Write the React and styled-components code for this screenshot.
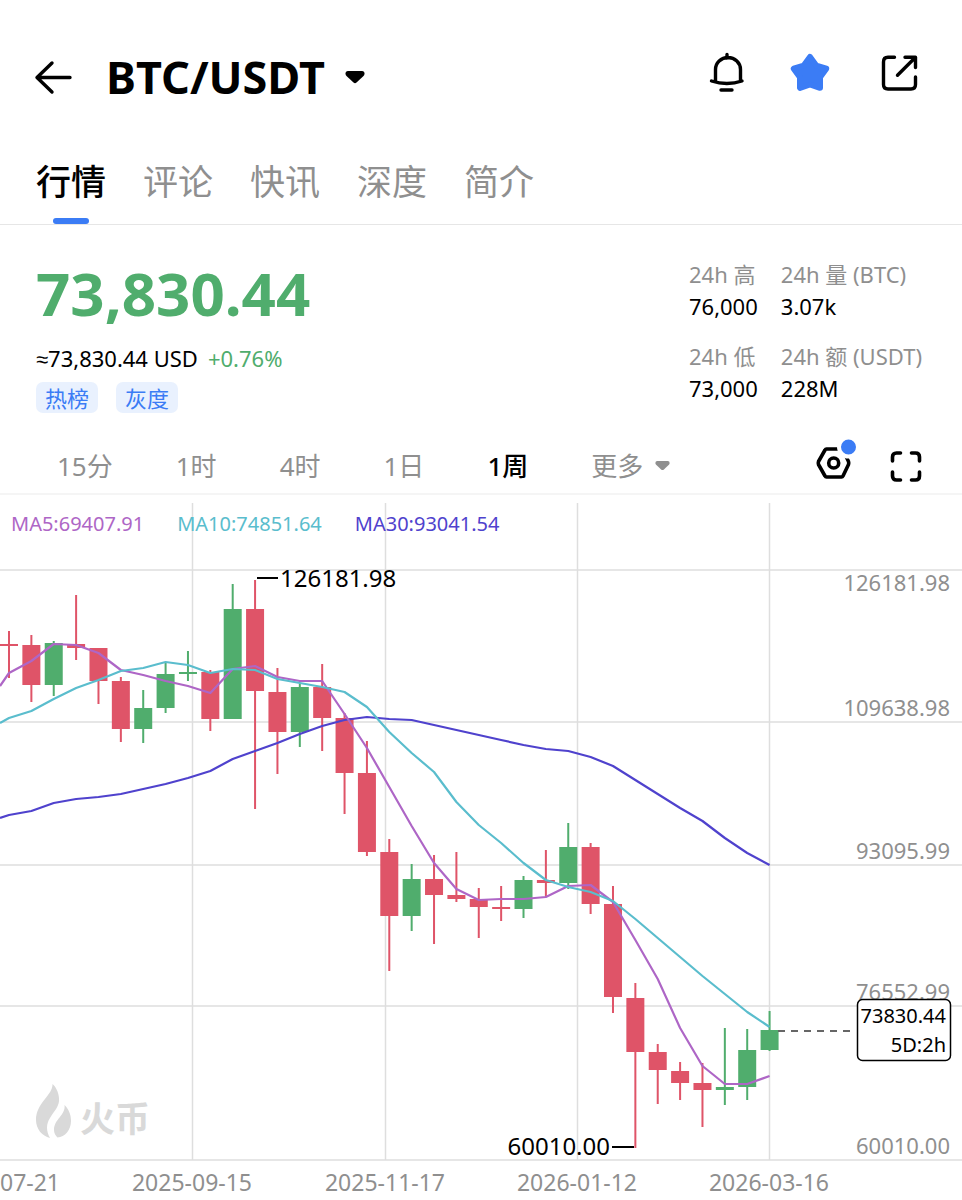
import { useState } from 'react'
import styled, { createGlobalStyle } from 'styled-components'

const UP = '#50ad6d';
const DOWN = '#df5468';
const BLUE = '#3b7cf5';
const GREY = '#8f8f8f';

const GlobalStyle = createGlobalStyle`
  * {
    box-sizing: border-box;
  }

  body {
    margin: 0;
    background: #fff;
    color: #000;
    font-family: 'Noto Sans', 'Liberation Sans', 'Noto Sans CJK SC', sans-serif;
  }

  button {
    padding: 0;
    border: none;
    background: none;
    color: inherit;
    font: inherit;
    cursor: pointer;
  }

  svg {
    display: block;
  }
`;

const Page = styled.main`
  display: flex;
  flex-direction: column;
  overflow: hidden;
`;

const Header = styled.header`
  display: flex;
  align-items: center;
  height: 109px;
  padding: 45px 35px 0 34px;
`;

const PairButton = styled.button`
  display: flex;
  align-items: center;
  gap: 20px;
  margin-left: 32px;
  font-size: 45px;
  font-weight: 700;
  line-height: 64px;
`;

const Actions = styled.div`
  display: flex;
  gap: 30px;
  margin-left: auto;
`;

const Tabs = styled.nav`
  display: flex;
  gap: 37px;
  padding: 45px 36px 0;
  border-bottom: 1px solid #e6e6e6;
`;

const Tab = styled.button`
  position: relative;
  padding-bottom: 18px;
  color: ${({ $active }) => ($active ? '#000' : GREY)};
  font-family: 'Noto Sans CJK SC', sans-serif;
  font-size: 35px;
  font-weight: ${({ $active }) => ($active ? 500 : 400)};
  line-height: 52px;

  &::after {
    content: '';
    position: absolute;
    bottom: 0;
    left: 50%;
    width: 36px;
    height: 6px;
    margin-left: -18px;
    border-radius: 3px;
    background: ${({ $active }) => ($active ? BLUE : 'transparent')};
  }
`;

const Summary = styled.section`
  display: flex;
  justify-content: space-between;
  align-items: flex-start;
  padding: 32px 40px 27px 36px;
  font-size: 22px;
  line-height: 32px;
`;

const Price = styled.div`
  color: ${UP};
  font-size: 60px;
  font-weight: 700;
  line-height: 72px;
`;

const Converted = styled.div`
  display: flex;
  gap: 10px;
  margin-top: 13px;
`;

const Change = styled.span`
  color: ${UP};
`;

const Tags = styled.div`
  display: flex;
  gap: 18px;
  margin-top: 8px;
`;

const Tag = styled.a`
  padding: 0 9px;
  border-radius: 7px;
  background: #e9f1fe;
  color: ${BLUE};
  font-family: 'Noto Sans CJK SC', sans-serif;
  line-height: 31px;
  text-decoration: none;
`;

const Stats = styled.dl`
  display: grid;
  grid-template-columns: auto auto;
  gap: 18px 23px;
  margin: 1px 0 0;

  dt {
    color: ${GREY};
  }

  dd {
    margin: 0;
  }
`;

const PeriodBar = styled.div`
  display: flex;
  align-items: center;
  height: 55px;
  padding: 0 40px 2px 57px;
  border-bottom: 2px solid #f5f5f5;
`;

const Periods = styled.div`
  display: flex;
  gap: 63px;
`;

const Period = styled.button`
  display: flex;
  align-items: center;
  gap: 12px;
  color: ${({ $active }) => ($active ? '#000' : GREY)};
  font-size: 26px;
  font-weight: ${({ $active }) => ($active ? 500 : 400)};
  line-height: 40px;
`;

const Tools = styled.div`
  display: flex;
  gap: 34px;
  margin: 0 0 12px auto;
`;

const ChartArea = styled.section`
  position: relative;
`;

const Legend = styled.div`
  position: absolute;
  top: 14px;
  left: 11px;
  display: flex;
  gap: 33px;
  font-size: 20px;
  line-height: 30px;
`;

const LegendItem = styled.span`
  color: ${({ $color }) => $color};
`;

const Plot = styled.svg`
  width: 100%;
  height: auto;
  font-size: 22px;
`;

const tabs = ['行情', '评论', '快讯', '深度', '简介'];
const periods = ['15分', '1时', '4时', '1日', '1周'];

const stats = [
  { label: '24h 高', value: '76,000' },
  { label: '24h 量 (BTC)', value: '3.07k' },
  { label: '24h 低', value: '73,000' },
  { label: '24h 额 (USDT)', value: '228M' },
];

// body top, body bottom, high, low, rising
const candles = [
  [644, 646, 631, 678, 0],
  [645, 685, 635, 702, 0],
  [643, 685, 641, 696, 1],
  [644, 648, 595, 660, 0],
  [648, 681, 648, 704, 0],
  [681, 729, 677, 742, 0],
  [708, 729, 690, 743, 1],
  [674, 708, 663, 713, 1],
  [672, 674, 651, 681, 1],
  [672, 719, 670, 731, 0],
  [609, 719, 584, 719, 1],
  [609, 691, 580, 809, 0],
  [692, 732, 668, 774, 0],
  [687, 732, 684, 747, 1],
  [687, 718, 664, 751, 0],
  [718, 773, 713, 814, 0],
  [773, 852, 741, 856, 0],
  [852, 916, 839, 971, 0],
  [879, 916, 864, 931, 1],
  [879, 895, 855, 944, 0],
  [895, 899, 852, 902, 0],
  [899, 907, 888, 938, 0],
  [907, 909, 886, 921, 0],
  [880, 909, 876, 918, 1],
  [880, 883, 850, 897, 0],
  [847, 883, 823, 889, 1],
  [847, 904, 843, 914, 0],
  [904, 997, 886, 1013, 0],
  [998, 1052, 983, 1148, 0],
  [1052, 1070, 1044, 1104, 0],
  [1071, 1083, 1062, 1100, 0],
  [1083, 1090, 1063, 1127, 0],
  [1087, 1090, 1028, 1105, 1],
  [1050, 1087, 1029, 1100, 1],
  [1030, 1050, 1011, 1051, 1],
];

// the first point of each line sits on the left edge, the rest on a candle
const averages = [
  {
    label: 'MA30:93041.54',
    color: '#4f42cd',
    points: [818, 815, 811, 803, 799, 797, 794, 789, 784, 778, 771, 759, 751, 743, 734, 726, 720, 717, 719, 720, 725, 730, 735, 740, 745, 749, 751, 757, 766, 780, 794, 808, 821, 838, 853, 865],
  },
  {
    label: 'MA5:69407.91',
    color: '#ae66c6',
    points: [686, 673, 661, 644, 645, 653, 670, 675, 681, 686, 693, 669, 666, 677, 681, 681, 714, 748, 787, 826, 863, 889, 900, 899, 899, 897, 886, 885, 902, 940, 979, 1028, 1066, 1084, 1084, 1076],
  },
  {
    label: 'MA10:74851.64',
    color: '#5abdcd',
    points: [723, 718, 711, 699, 688, 680, 671, 668, 662, 665, 673, 669, 670, 679, 683, 687, 692, 707, 732, 753, 772, 802, 825, 843, 863, 880, 887, 892, 901, 919, 938, 957, 976, 994, 1012, 1027],
  },
];

const legend = [averages[1], averages[2], averages[0]];

const priceLabels = [
  { text: '126181.98', line: 570, y: 591 },
  { text: '109638.98', line: 722, y: 716 },
  { text: '93095.99', line: 865, y: 859 },
  { text: '76552.99', line: 1006, y: 1000 },
  { text: '60010.00', line: 1160, y: 1154 },
];

const dates = [
  { text: '2025-07-21', x: 0 },
  { text: '2025-09-15', x: 192 },
  { text: '2025-11-17', x: 385 },
  { text: '2026-01-12', x: 577 },
  { text: '2026-03-16', x: 769 },
];

const candleX = (i) => 9 + i * 22.37;

const toPath = (points) =>
  points.map((y, i) => `${i === 0 ? 0 : candleX(i - 1)},${y}`).join(' ');

const BackIcon = () => (
  <svg width="40" height="40" viewBox="0 0 40 40" fill="none" stroke="#000" strokeWidth="3.400" strokeLinecap="round" strokeLinejoin="round">
    <path d="M18 6 3 20.500 18 35M3 20.500H36" />
  </svg>
);

const CaretIcon = ({ size, color }) => (
  <svg width={size} height={size} viewBox="0 0 20 20" fill={color}>
    <path d="M3 4H17Q19.500 4 19.500 6.500 19.500 8 18.500 9L11.500 15.500Q10 16.800 8.500 15.500L1.500 9Q.5 8 .5 6.500.5 4 3 4Z" />
  </svg>
);

const BellIcon = () => (
  <svg width="56" height="56" viewBox="0 0 56 56" fill="none" stroke="#000" strokeWidth="3.400" strokeLinecap="round" strokeLinejoin="round">
    <path d="M28 5.500V9M16.500 32V20.500A12.500 12 0 0 1 41.500 20.500V32M12.500 32Q28 37 43 32M22 41H33" />
  </svg>
);

const StarIcon = () => (
  <svg width="56" height="56" viewBox="0 0 56 56" fill={BLUE} stroke={BLUE} strokeWidth="6" strokeLinejoin="round">
    <path d="M25 8 31.200 16.500 41.200 19.700 35 28.200V38.800L25 35.500 15 38.800V28.200L8.800 19.700 18.800 16.500Z" />
  </svg>
);

const ShareIcon = () => (
  <svg width="56" height="56" viewBox="0 0 56 56" fill="none" stroke="#000" strokeWidth="3.400" strokeLinecap="round" strokeLinejoin="round">
    <path d="M23.500 8.300H17Q12.500 8.300 12.500 13V35.500Q12.500 40 17 40H40Q44.500 40 44.500 35.500V28M34 8.300H44.500V18.500M44.500 8.300 26.500 26.300" />
  </svg>
);

const SettingsIcon = () => (
  <svg width="40" height="46" viewBox="0 0 40 46" fill="none" stroke="#000" strokeWidth="3.600" strokeLinejoin="round">
    <path d="M10.500 12H25.500Q26.500 12 27 13L32.500 24.500Q33 26 32.500 27.500L27 39Q26.500 40 25.500 40H10.500Q9.500 40 9 39L2.500 27.500Q2 26 2.500 24.500L9 13Q9.500 12 10.500 12Z" />
    <circle cx="17.700" cy="26" r="5" />
    <circle cx="32.500" cy="10" r="9.500" fill={BLUE} stroke="#fff" strokeWidth="4" />
  </svg>
);

const ExpandIcon = () => (
  <svg width="32" height="46" viewBox="0 0 32 46" fill="none" stroke="#000" strokeWidth="3.600" strokeLinecap="round">
    <path d="M2.500 24V20Q2.500 16 6.500 16H10.500M21.500 16H25.500Q29.500 16 29.500 20V24M29.500 35V39Q29.500 43 25.500 43H21.500M10.500 43H6.500Q2.500 43 2.500 39V35" />
  </svg>
);

const Watermark = () => (
  <g fill="#d9d9d9">
    <path d="M52.500 1084C53 1095 36 1103 36 1120C36 1129 42 1136 50 1138C46 1131 46 1124 50 1118C54 1111 60 1106 59 1098C58.500 1092 56 1087 52.500 1084Z" />
    <path d="M64.500 1105C66 1115 54 1119 54 1130C54 1133 55.500 1136 57.500 1137.500C65 1137 71 1130 71 1121C71 1114 68.500 1109 64.500 1105Z" />
    <text x="80" y="1132" fontSize="35" fontWeight="700">火币</text>
  </g>
);

const Chart = () => (
  <Plot viewBox="0 495 962 705" role="img" aria-label="BTC/USDT 1周">
    <g stroke="#dedede" strokeWidth="1.500">
      {priceLabels.map(({ line }) => (
        <line key={line} x1="0" x2="962" y1={line} y2={line} />
      ))}
      {dates.slice(1).map(({ x }) => (
        <line key={x} x1={x + 0.5} x2={x + 0.5} y1="503" y2="1160" />
      ))}
    </g>

    <Watermark />

    {candles.map(([top, bottom, high, low, rising], i) => (
      <g key={i} fill={rising ? UP : DOWN}>
        <rect x={candleX(i) - 1} y={high} width="2" height={low - high} />
        <rect x={candleX(i) - 9} y={top} width="18" height={bottom - top} />
      </g>
    ))}

    {averages.map(({ label, color, points }) => (
      <polyline key={label} points={toPath(points)} fill="none" stroke={color} strokeWidth="2.200" strokeLinejoin="round" />
    ))}

    <g fill={GREY}>
      {priceLabels.map(({ text, y }) => (
        <text key={text} x="950" y={y} textAnchor="end">{text}</text>
      ))}
      {dates.map(({ text, x }) => (
        <text key={text} x={x} y="1191" textAnchor="middle" fontSize="23">{text}</text>
      ))}
    </g>

    <g fontSize="24">
      <path d="M257 578H278M612 1147H634" stroke="#000" strokeWidth="2" />
      <text x="280" y="587">126181.98</text>
      <text x="610" y="1155" textAnchor="end">60010.00</text>
    </g>

    <path d="M778 1031H853" stroke="#666" strokeWidth="2" strokeDasharray="7 6" />
    <rect x="857.500" y="999.500" width="93" height="61" rx="5" fill="#fff" stroke="#000" strokeWidth="1.500" />
    <g fontSize="20" textAnchor="end">
      <text x="946" y="1023">73830.44</text>
      <text x="946" y="1052">5D:2h</text>
    </g>
  </Plot>
);

const App = () => {
  const [tab, setTab] = useState('行情');
  const [period, setPeriod] = useState('1周');

  return (
    <Page>
      <GlobalStyle />
      <Header>
        <button type="button" aria-label="返回"><BackIcon /></button>
        <PairButton type="button">
          BTC/USDT
          <CaretIcon size={20} color="#000" />
        </PairButton>
        <Actions>
          <button type="button" aria-label="提醒"><BellIcon /></button>
          <button type="button" aria-label="收藏"><StarIcon /></button>
          <button type="button" aria-label="分享"><ShareIcon /></button>
        </Actions>
      </Header>

      <Tabs>
        {tabs.map((name) => (
          <Tab key={name} type="button" $active={name === tab} onClick={() => setTab(name)}>
            {name}
          </Tab>
        ))}
      </Tabs>

      <Summary>
        <div>
          <Price>73,830.44</Price>
          <Converted>
            <span>≈73,830.44 USD</span>
            <Change>+0.76%</Change>
          </Converted>
          <Tags>
            <Tag href="#hot">热榜</Tag>
            <Tag href="#grayscale">灰度</Tag>
          </Tags>
        </div>
        <Stats>
          {stats.map(({ label, value }) => (
            <div key={label}>
              <dt>{label}</dt>
              <dd>{value}</dd>
            </div>
          ))}
        </Stats>
      </Summary>

      <PeriodBar>
        <Periods>
          {periods.map((name) => (
            <Period key={name} type="button" $active={name === period} onClick={() => setPeriod(name)}>
              {name}
            </Period>
          ))}
          <Period type="button">
            更多
            <CaretIcon size={15} color={GREY} />
          </Period>
        </Periods>
        <Tools>
          <button type="button" aria-label="指标设置"><SettingsIcon /></button>
          <button type="button" aria-label="全屏"><ExpandIcon /></button>
        </Tools>
      </PeriodBar>

      <ChartArea>
        <Chart />
        <Legend>
          {legend.map(({ label, color }) => (
            <LegendItem key={label} $color={color}>{label}</LegendItem>
          ))}
        </Legend>
      </ChartArea>
    </Page>
  );
};

export default App;
